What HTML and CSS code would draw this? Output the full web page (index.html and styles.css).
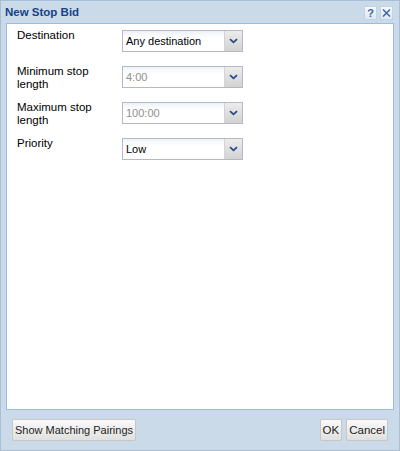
FILE: index.html
```html
<!DOCTYPE html>
<html>
<head>
<meta charset="utf-8">
<link rel="stylesheet" href="styles.css">
</head>
<body>
<div class="window">
  <div class="titlebar">
    <span class="title">New Stop Bid</span>
    <div class="tools">
      <span class="tool">
        <svg width="11" height="12" viewBox="0 0 11 12"><text x="5.5" y="10" text-anchor="middle" class="qmark">?</text></svg>
      </span>
      <span class="tool">
        <svg width="11" height="12" viewBox="0 0 11 12"><path d="M2 2.5 L9 9.5 M9 2.5 L2 9.5" stroke="#3a64a0" stroke-width="1.5" fill="none"/></svg>
      </span>
    </div>
  </div>
  <div class="body">
    <div class="form">
      <div class="row">
        <label class="label">Destination</label>
        <div class="combo"><span class="value">Any destination</span><span class="trigger"><svg width="9" height="6" viewBox="0 0 9 6"><path d="M1 1.2 L4.5 4.3 L8 1.2" stroke="#2a4a86" stroke-width="1.8" fill="none"/></svg></span></div>
      </div>
      <div class="row">
        <label class="label">Minimum stop length</label>
        <div class="combo disabled"><span class="value">4:00</span><span class="trigger"><svg width="9" height="6" viewBox="0 0 9 6"><path d="M1 1.2 L4.5 4.3 L8 1.2" stroke="#2a4a86" stroke-width="1.8" fill="none"/></svg></span></div>
      </div>
      <div class="row">
        <label class="label">Maximum stop length</label>
        <div class="combo disabled"><span class="value">100:00</span><span class="trigger"><svg width="9" height="6" viewBox="0 0 9 6"><path d="M1 1.2 L4.5 4.3 L8 1.2" stroke="#2a4a86" stroke-width="1.8" fill="none"/></svg></span></div>
      </div>
      <div class="row">
        <label class="label">Priority</label>
        <div class="combo"><span class="value">Low</span><span class="trigger"><svg width="9" height="6" viewBox="0 0 9 6"><path d="M1 1.2 L4.5 4.3 L8 1.2" stroke="#2a4a86" stroke-width="1.8" fill="none"/></svg></span></div>
      </div>
    </div>
  </div>
  <div class="footer">
    <button class="btn">Show Matching Pairings</button>
    <div class="right">
      <button class="btn btn-wide">OK</button>
      <button class="btn btn-wide">Cancel</button>
    </div>
  </div>
</div>
</body>
</html>
```
FILE: styles.css
```css
html, body {
  margin: 0;
  padding: 0;
}
body {
  font-family: "Liberation Sans", Arial, sans-serif;
  font-size: 11px;
  width: 400px;
  height: 451px;
}
.window {
  box-sizing: border-box;
  width: 400px;
  height: 451px;
  background: #cbdae8;
  border: 1px solid #a9bfd6;
  display: flex;
  flex-direction: column;
}
.titlebar {
  height: 22px;
  display: flex;
  align-items: center;
  justify-content: space-between;
  padding: 0 6px 0 4px;
  flex: none;
}
.title {
  font-weight: bold;
  font-size: 11.5px;
  color: #15428b;
}
.tools {
  display: flex;
  gap: 3px;
  margin-top: 2px;
}
.tool {
  width: 13px;
  height: 14px;
  box-sizing: border-box;
  border: 1px solid #c2d3e6;
  background: linear-gradient(#f6f9fc, #dde7f2);
  display: flex;
  align-items: center;
  justify-content: center;
}
.qmark {
  font-family: "Liberation Sans", Arial, sans-serif;
  font-weight: bold;
  font-size: 11px;
  fill: #3a64a0;
}
.body {
  flex: 1;
  margin: 0 5px;
  background: #fff;
  border: 1px solid #99bbe8;
}
.form {
  padding: 6px 0 0 10px;
  display: flex;
  flex-direction: column;
  gap: 14px;
}
.row {
  display: flex;
  align-items: flex-start;
  height: 22px;
}
.label {
  flex: none;
  box-sizing: border-box;
  width: 105px;
  padding-right: 20px;
  margin-top: -1px;
  line-height: 12.5px;
  font-size: 11.5px;
  color: #000;
}
.combo {
  flex: none;
  width: 121px;
  height: 22px;
  box-sizing: border-box;
  border: 1px solid #b5b8c8;
  display: flex;
  background: #fff;
}
.value {
  flex: 1;
  padding: 0 3px;
  line-height: 20px;
  color: #000;
  background: linear-gradient(#eef2f6, #ffffff 35%);
}
.disabled .value {
  color: #8f8f8f;
}
.trigger {
  width: 17px;
  border-left: 1px solid #d4d4d4;
  background: linear-gradient(#ececec, #d2d2d2);
  display: flex;
  align-items: center;
  justify-content: center;
}
.footer {
  height: 40px;
  flex: none;
  display: flex;
  align-items: center;
  justify-content: space-between;
  padding: 0 11px 0 11px;
}
.right {
  display: flex;
  gap: 4px;
}
.btn {
  font-family: "Liberation Sans", Arial, sans-serif;
  font-size: 11px;
  color: #222;
  height: 22px;
  padding: 0 2px;
  border: 1px solid #c6c6c6;
  border-radius: 2px;
  background: linear-gradient(#fafafa, #e0e0e0);
  margin: 0;
}
.btn-wide {
  font-size: 11.5px;
  padding: 0 2px;
}
```
